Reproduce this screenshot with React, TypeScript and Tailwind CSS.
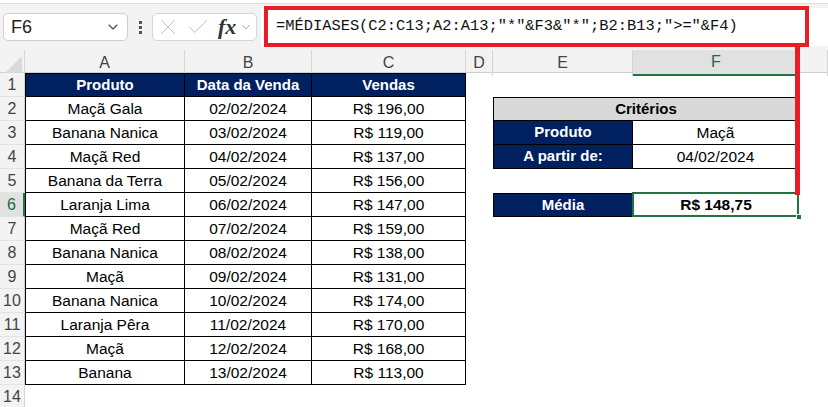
import { X, Check, ChevronDown } from 'lucide-react'

const ROWS = [
  ['Maçã Gala', '02/02/2024', 'R$ 196,00'],
  ['Banana Nanica', '03/02/2024', 'R$ 119,00'],
  ['Maçã Red', '04/02/2024', 'R$ 137,00'],
  ['Banana da Terra', '05/02/2024', 'R$ 156,00'],
  ['Laranja Lima', '06/02/2024', 'R$ 147,00'],
  ['Maçã Red', '07/02/2024', 'R$ 159,00'],
  ['Banana Nanica', '08/02/2024', 'R$ 138,00'],
  ['Maçã', '09/02/2024', 'R$ 131,00'],
  ['Banana Nanica', '10/02/2024', 'R$ 174,00'],
  ['Laranja Pêra', '11/02/2024', 'R$ 170,00'],
  ['Maçã', '12/02/2024', 'R$ 168,00'],
  ['Banana', '13/02/2024', 'R$ 113,00'],
]

const COLS = ['A', 'B', 'C', 'D', 'E', 'F', '']

const GRID = 'grid grid-cols-[25px_160px_127px_154px_27px_140px_166px_1fr]'

function RowHead({ n, active }: { n: number; active?: boolean }) {
  return (
    <div
      className={
        active
          ? 'flex items-center justify-center bg-[#e1e1e1] border-b border-[#e4e4e4] border-r-2 border-r-[#217346] text-[#1e6b41] text-[16px]'
          : 'flex items-center justify-center bg-[#f3f3f3] border-b border-[#e4e4e4] border-r border-r-[#d4d4d4] text-[#444] text-[16px]'
      }
    >
      {n}
    </div>
  )
}

function Criteria({ row }: { row: number }) {
  if (row === 2)
    return (
      <div className="col-span-2 flex items-center justify-center bg-[#d9d9d9] border border-black font-bold text-[15px] text-black">
        Critérios
      </div>
    )
  if (row === 3 || row === 4)
    return (
      <>
        <div className="flex items-center justify-center bg-[#002060] border-l border-r border-b border-black font-bold text-white text-[15px]">
          {row === 3 ? 'Produto' : 'A partir de:'}
        </div>
        <div className="flex items-center justify-center border-r border-b border-black text-[15.5px] text-black">
          {row === 3 ? 'Maçã' : '04/02/2024'}
        </div>
      </>
    )
  if (row === 6)
    return (
      <>
        <div className="flex items-center justify-center bg-[#002060] border border-black font-bold text-white text-[15px]">
          Média
        </div>
        <div className="relative flex items-center justify-center font-bold text-[15.5px] text-black">
          R$ 148,75
          <div className="absolute left-[-1px] top-[-1px] right-0 bottom-0 border-2 border-[#217346]" />
          <div className="absolute right-[-3px] bottom-[-3px] w-[6px] h-[6px] bg-[#217346] border border-white" />
        </div>
      </>
    )
  return (
    <>
      <div />
      <div />
    </>
  )
}

export default function App() {
  return (
    <div className="relative w-[828px] h-[407px] overflow-hidden bg-white font-['Liberation_Sans',Arial,sans-serif]">
      {/* ribbon edge */}
      <div className="h-[4px] bg-white border-b border-[#dedede]" />

      {/* formula bar */}
      <div className="flex h-[46px] items-center bg-[#f3f3f3] pl-[3px]">
        <div className="flex h-[28px] w-[125px] items-center justify-between rounded-[5px] border border-[#cfcfcf] bg-white pl-[7px] pr-[6px]">
          <span className="text-[18px] text-[#222]">F6</span>
          <ChevronDown size={16} strokeWidth={1.6} className="text-[#444]" />
        </div>
        <div className="ml-[11px] mr-[10px] flex flex-col gap-[2px]">
          <div className="h-[3px] w-[3px] bg-[#555]" />
          <div className="h-[3px] w-[3px] bg-[#555]" />
          <div className="h-[3px] w-[3px] bg-[#555]" />
        </div>
        <div className="flex h-[28px] w-[105px] items-center rounded-[5px] border border-[#d6d6d6] bg-white pl-[2px]">
          <X size={26} strokeWidth={0.9} className="text-[#bdbdbd]" />
          <Check size={26} strokeWidth={0.9} className="ml-[4px] text-[#bdbdbd]" />
          <span className="ml-[7px] font-['Liberation_Serif',serif] text-[22px] italic font-bold text-[#333] leading-none">
            fx
          </span>
          <ChevronDown size={14} strokeWidth={1.4} className="ml-[3px] text-[#888]" />
        </div>
        <div className="ml-[4px] flex h-[38px] flex-1 items-center bg-white pl-[15px]">
          <span className="font-['Liberation_Mono',monospace] text-[15.4px] text-[#111] whitespace-pre">
            =MÉDIASES(C2:C13;A2:A13;"*"&amp;F3&amp;"*";B2:B13;"&gt;="&amp;F4)
          </span>
        </div>
      </div>

      {/* column headers */}
      <div className={`${GRID} h-[23px] bg-[#f3f3f3] border-b border-[#d0d0d0]`}>
        <div className="flex items-end justify-end border-r border-[#d4d4d4] pb-[2px] pr-[2px]">
          <svg width="18" height="18" viewBox="0 0 18 18">
            <polygon points="18,0 18,18 0,18" fill="#dadada" />
          </svg>
        </div>
        {COLS.map((c, i) => (
          <div
            key={i}
            className={
              c === 'F'
                ? 'flex items-center justify-center bg-[#e1e1e1] border-b-2 border-[#217346] text-[16px] text-[#1e6b41]'
                : 'flex items-center justify-center border-r border-[#d4d4d4] text-[16px] text-[#444]'
            }
          >
            {c}
          </div>
        ))}
      </div>

      {/* sheet */}
      <div className={`${GRID} auto-rows-[24px]`}>
        <RowHead n={1} />
        {['Produto', 'Data da Venda', 'Vendas'].map((h, i) => (
          <div
            key={h}
            className={`flex items-center justify-center bg-[#002060] border-t border-r border-b border-black font-bold text-white text-[15px] ${i === 0 ? 'border-l' : ''}`}
          >
            {h}
          </div>
        ))}
        <div />
        <div />
        <div />
        <div />

        {ROWS.map((r, idx) => {
          const n = idx + 2
          return (
            <div key={n} className="contents">
              <RowHead n={n} active={n === 6} />
              {r.map((v, i) => (
                <div
                  key={i}
                  className={`flex items-center justify-center border-r border-b border-black text-[15.5px] text-black ${i === 0 ? 'border-l' : ''}`}
                >
                  {v}
                </div>
              ))}
              <div />
              <Criteria row={n} />
              <div />
            </div>
          )
        })}
        <RowHead n={14} />
      </div>

      {/* annotation */}
      <div className="absolute left-[264px] top-[6px] h-[41px] w-[545px] border-4 border-[#e81d25]" />
      <div className="absolute left-[795px] top-[44px] h-[151px] w-[5px] bg-[#e81d25]" />
    </div>
  )
}
